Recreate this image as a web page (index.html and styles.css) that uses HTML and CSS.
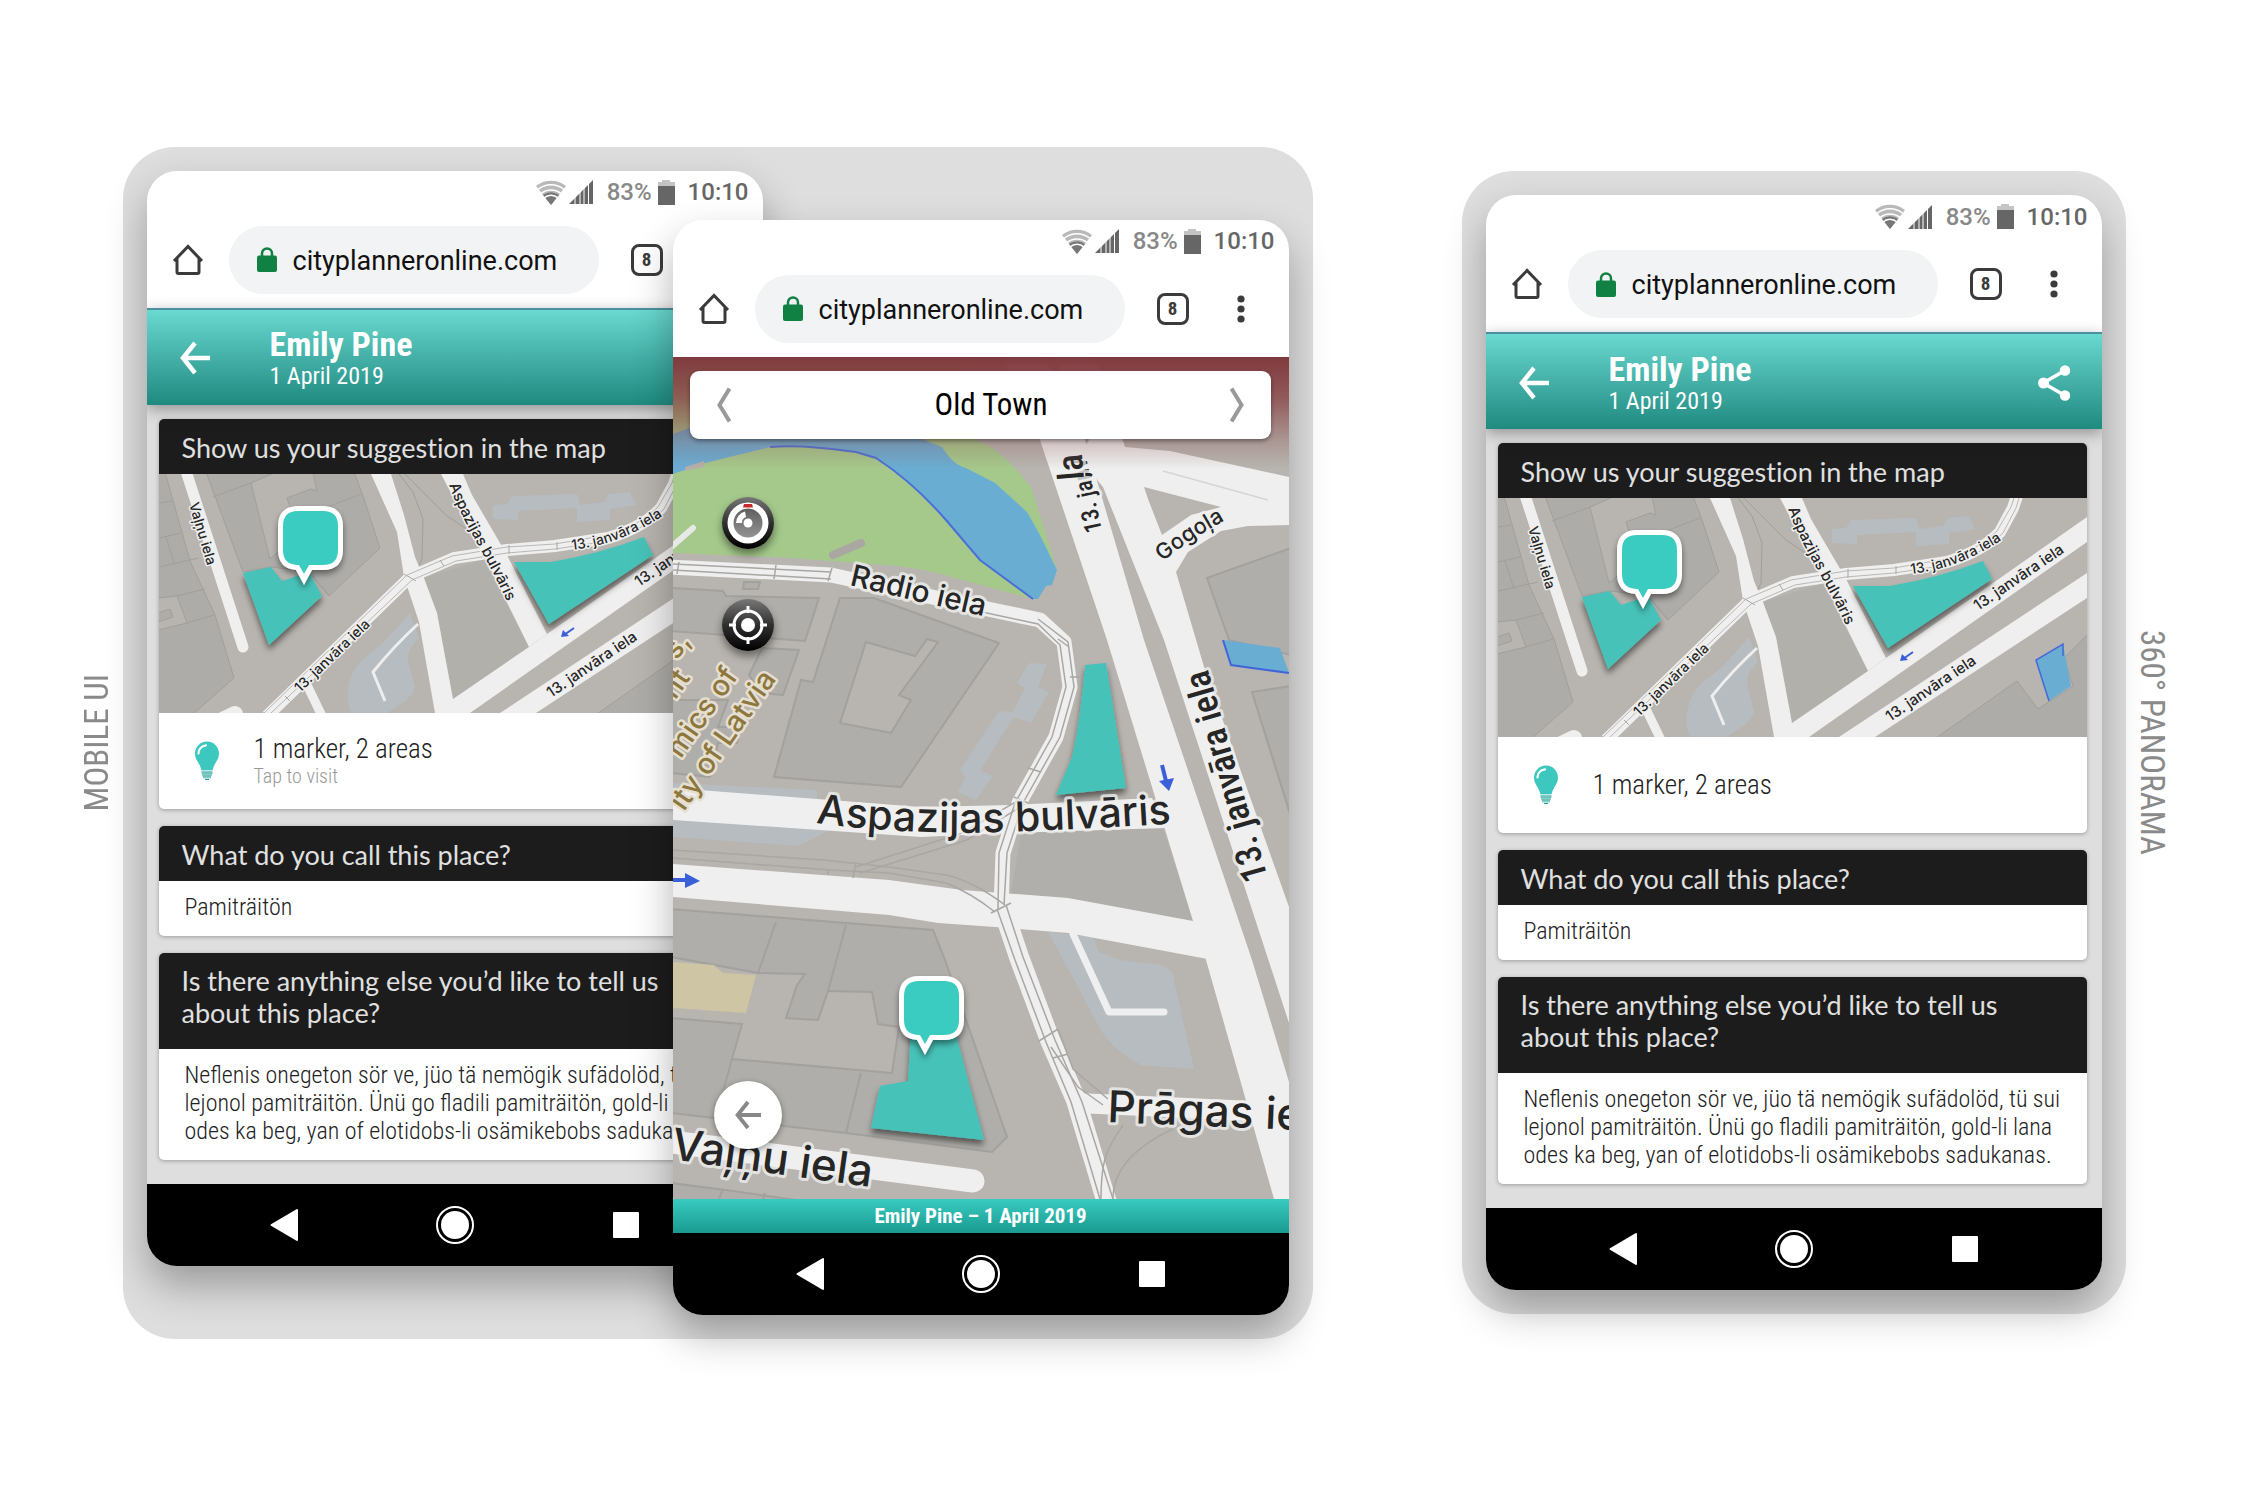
FILE: index.html
```html
<!DOCTYPE html>
<html lang="en">
<head>
<meta charset="utf-8">
<meta name="viewport" content="width=device-width, initial-scale=1">
<title>City Planner Online – mobile views</title>
<link rel="stylesheet" href="styles.css">
</head>
<body>

<svg class="sprite" aria-hidden="true">
  <defs>
    <linearGradient id="knob" x1="0" y1="0" x2="0" y2="1"><stop offset="0" stop-color="#777"/><stop offset=".5" stop-color="#303030"/><stop offset="1" stop-color="#000"/></linearGradient>
    <linearGradient id="lens" x1="0" y1="0" x2="0" y2="1"><stop offset="0" stop-color="#5f5f5f"/><stop offset="1" stop-color="#939393"/></linearGradient>
    <filter id="area-shadow" x="-20%" y="-20%" width="140%" height="150%"><feDropShadow dx="0" dy="5" stdDeviation="3" flood-opacity=".5"/></filter>
    <filter id="pin-shadow" x="-30%" y="-20%" width="160%" height="160%"><feDropShadow dx="0" dy="4" stdDeviation="3" flood-opacity=".45"/></filter>
  </defs>
  <symbol id="i-wifi" viewBox="0 0 30 25">
    <path d="M15 25 L0 6 A24 24 0 0 1 30 6 Z" fill="#b9b9b9"/>
    <path d="M15 25 L7 15 A13 13 0 0 1 23 15 Z" fill="#777"/>
    <path d="M2 9.500 A20 20 0 0 1 28 9.500 M5 13.500 A16 16 0 0 1 25 13.500 M8 18 A10 10 0 0 1 22 18" fill="none" stroke="#fff" stroke-width="1.500"/>
  </symbol>
  <symbol id="i-signal" viewBox="0 0 24 24">
    <path d="M24 0 V24 H0 Z" fill="#666"/>
    <path d="M6 10 V24 M11 8 V24 M15 4 V24 M19.500 0 V24" stroke="#fff" stroke-width="1"/>
  </symbol>
  <symbol id="i-battery" viewBox="0 0 17 25">
    <path d="M4 0 H12 V2 H17 V6 H0 V2 H4 Z" fill="#c4c4c4"/><path d="M0 6 H17 V25 H0 Z" fill="#666"/>
  </symbol>
  <symbol id="i-home" viewBox="0 0 32 32">
    <path d="M2 17 L16 2.500 L30 17 M5 14.500 V28 Q5 29.500 6.500 29.500 H25.500 Q27 29.500 27 28 V14.500" fill="none" stroke="#3b3b3b" stroke-width="3" stroke-linejoin="miter"/>
  </symbol>
  <symbol id="i-lock" viewBox="0 0 20 25">
    <rect y="8.500" width="20" height="16.500" rx="2" fill="#108043"/><path d="M5 10 V6.500 A5 5 0 0 1 15 6.500 V10" fill="none" stroke="#108043" stroke-width="2.500"/>
  </symbol>
  <symbol id="i-more" viewBox="0 0 40 32">
    <g fill="#3b3b3b"><circle cx="20" cy="6" r="3.600"/><circle cx="20" cy="16" r="3.600"/><circle cx="20" cy="26" r="3.600"/></g>
  </symbol>
  <symbol id="i-arrow" viewBox="0 0 30 34">
    <path d="M15 2 L3 17 L15 32 M3.500 17 H30" fill="none" stroke="currentColor" stroke-width="4.500"/>
  </symbol>
  <symbol id="i-share" viewBox="0 0 32 36">
    <path d="M27 5.500 L5 18 L27 30.500" fill="none" stroke="#fff" stroke-width="3.500"/>
    <circle cx="27" cy="5.500" r="5.200" fill="#fff"/><circle cx="5.500" cy="18" r="5.500" fill="#fff"/><circle cx="27" cy="30.500" r="5.200" fill="#fff"/>
  </symbol>
  <symbol id="i-bulb" viewBox="0 0 26 40">
    <path d="M13 0.500 C20 .500 25 6 25 13 C25 19 20 22 18.700 29 H7.300 C6 22 1 19 1 13 C1 6 6 .500 13 .500 Z" fill="#3cc8be"/>
    <path d="M4.500 12.500 C4.500 8 7.500 4.800 12 4.300" fill="none" stroke="#fff" stroke-width="2.200" stroke-linecap="round"/>
    <path d="M7.500 30.500 H18.500 M8 33.500 H18 M9 36.500 H17" stroke="#7fd0ca" stroke-width="1.800"/><path d="M7.500 32 H18.500 M8.500 35 H17.500 M11 38.500 H15" stroke="#2a9a92" stroke-width="1"/>
  </symbol>
  <symbol id="i-back" viewBox="0 0 28 34"><path d="M1.500 17 L27 2 V32 Z" fill="#fff" stroke="#fff" stroke-width="2" stroke-linejoin="round"/></symbol>
  <symbol id="i-circle" viewBox="0 0 38 38"><circle cx="19" cy="19" r="18" fill="none" stroke="#fff" stroke-width="2"/><circle cx="19" cy="19" r="14" fill="#fff"/></symbol>
  <symbol id="i-square" viewBox="0 0 26 26"><rect width="26" height="26" rx="1" fill="#fff"/></symbol>
  <symbol id="i-chevron" viewBox="0 0 14 36"><path d="M12.500 1.500 L2.500 18 L12.500 34.500" fill="none" stroke="#999" stroke-width="4"/></symbol>
  <symbol id="i-compass" viewBox="0 0 52 52">
    <circle cx="26" cy="26" r="26" fill="url(#knob)"/><circle cx="26" cy="26" r="20.500" fill="#fff"/>
    <circle cx="26" cy="26" r="14.500" fill="url(#lens)"/><path d="M14 26 A12 12 0 0 1 23 14.500 L24 20 A6 6 0 0 0 20 26 Z" fill="#fff"/><circle cx="26" cy="26" r="4.500" fill="#fff"/>
    <path d="M22 7 H30 L31 10.500 H21 Z" fill="#c92a2f"/>
  </symbol>
  <symbol id="i-locate" viewBox="0 0 52 52">
    <circle cx="26" cy="26" r="26" fill="url(#knob)"/><circle cx="26" cy="26" r="14" fill="none" stroke="#fff" stroke-width="3"/><circle cx="26" cy="26" r="7" fill="#fff"/>
    <path d="M26 7 V14 M26 38 V45 M7 26 H14 M38 26 H45" stroke="#fff" stroke-width="3"/>
  </symbol>
  <symbol id="pin" viewBox="-10 -10 90 110">
    <path filter="url(#pin-shadow)" d="M20 0 H45 C58 0 65 7 65 20 V44 C65 57 58 64 45 64 H34 L26 79 L18 64 C6 63 0 56 0 44 V20 C0 7 7 0 20 0 Z" fill="#fff"/>
    <path d="M20 5 H45 C55 5 60 10 60 20 V44 C60 54 55 59 45 59 H31 L26 68 L21 59 C10 59 5 54 5 44 V20 C5 10 10 5 20 5 Z" fill="#3accc1"/>
  </symbol>

  <symbol id="minimap" viewBox="0 0 589 239" preserveAspectRatio="xMidYMid slice">
    <rect width="589" height="239" fill="#b8b4af"/>
    <g fill="#adaca8" stroke="#a19f9b" stroke-width="1">
      <path d="M-2 -2 H6 L31 87 L56 141 L75 204 L33 241 H-2 Z"/>
      <path d="M47 -2 H195 L203 19 L221 74 L170 122 L150 98 L113 93 L84 98 Z"/>
      <path d="M438 240 L519 183 L540 211 L575 188 L566 160 L590 136 V240 Z"/>
      <path d="M265 104 L324 86 L370 173 L294 225 L278 139 Z" fill="#b1b0ab" stroke="none"/>
    </g>
    <g fill="#b8b4af" stroke="#a19f9b" stroke-width="1">
      <path d="M115 -1 L92 9 L111 85 L140 60 L128 24 L152 15 L158 17 L154 -1 Z"/>
      <path d="M-1 124 L18 122 L28 149 L-1 156 Z"/><path d="M-1 139 L11 135 L14 143 L-1 148 Z" fill="#adaca8"/>
      <path d="M0 29 L13 27 M0 64 L22 59 M7 63 L16 91 M0 93 L40 84 M18 122 L46 115 M28 149 L55 141 M54 23 L92 9 M202 20 L158 37 M150 98 L170 122" fill="none"/>
    </g>
    <g fill="#b7bcc0">
      <path d="M334 31 L348 30 L353 22 L418 20 L421 31 L445 28 L450 20 L471 18 L477 31 L451 35 V46 L418 48 V34 L359 37 V46 L334 45 Z"/>
      <path d="M251 139 L260 164 C250 175 249 178 249 186 L256 214 C250 228 240 230 229 239 H192 C187 225 187 215 194 198 C203 182 215 178 225 168 Z"/>
    </g>
    <path d="M259 150 Q235 172 214 198 L226 227" fill="none" stroke="#eee" stroke-width="3"/>
    <path d="M240 0 L254 18 L264 45 L263 85 L256 100 M246 0 L288 42 L348 82 M148 211 L160 239" fill="none" stroke="#a19f9b"/>
    <g fill="#efefef">
      <path d="M212 0 H232 L245 41 L256 83 L265 104 L278 139 L294 225 V239 H276 L260 148 L245 103 L238 58 Z"/>
      <path d="M282 0 H304 L313 21 L348 81 L388 160 L370 173 L326 84 L293 21 Z"/>
      <path d="M589 19 V44 L311 239 H290 L294 225 L370 173 L388 160 Z"/>
      <path d="M589 75 V100 L377 239 H341 Z"/>
    </g>
    <g fill="none" stroke="#efefef">
      <path d="M26 -6 L84 173" stroke-width="11" stroke-linecap="round"/>
      <path d="M76 240 L55 250" stroke-width="16" stroke-linecap="round"/>
      <path d="M148 211 L163 242" stroke-width="9"/>
      <path d="M108 242 L251 103 L295 84 L348 76 L396 72 L449 64 Q485 53 502 34 L515 10 L519 -2" stroke-width="12"/>
    </g>
    <path d="M105 239 L248 101 L293 82 L348 73 L396 70 L448 61 Q482 51 499 33 L513 9 L516 0 M112 239 L253 106 L297 87 L348 79 L396 75 L450 67 Q487 55 505 35 L518 10 L521 0" fill="none" stroke="#b9b8b5"/>
    <path d="M126 222 L131 227 M245 100 L257 107 M281 86 L285 92 M350 71 V80 M398 68 V76" stroke="#a9a7a3"/>
    <g filter="url(#area-shadow)" fill="#46c2b8">
      <path d="M84 99 L112 93 L123 107 L150 98 L163 122 L110 171 Z"/>
      <path d="M355 88 L392 88 Q440 80 485 63 L494 81 L390 150 Z"/>
    </g>
    <path d="M538 162 L565 146 L573 188 L551 203 Z" fill="#6aadd3"/><path d="M551 203 L538 162 L565 146 V158" fill="none" stroke="#4668d8" stroke-width="1.500"/>
    <path d="M415 154 L405 161" stroke="#3a5fd9" stroke-width="2"/><path d="M402 163 L404 156 L410 162 Z" fill="#3a5fd9"/>
    <use href="#pin" x="109" y="22" width="90" height="110"/>
  </symbol>
</svg>

<main class="stage">
  <p class="side side-left">MOBILE UI</p>

  <section class="bezel bezel-pair" aria-label="Mobile UI">
    <article class="phone phone-back">
      <div class="status"><svg class="wifi"><use href="#i-wifi"/></svg><svg class="signal"><use href="#i-signal"/></svg><span class="percent">83%</span><svg class="battery"><use href="#i-battery"/></svg><time class="clock">10:10</time></div>
      <div class="browser">
        <button class="icon-btn" type="button" aria-label="Home"><svg class="home"><use href="#i-home"/></svg></button>
        <div class="address"><svg class="lock"><use href="#i-lock"/></svg><input type="text" aria-label="Address" value="cityplanneronline.com"></div>
        <button class="tabs" type="button" aria-label="Open tabs">8</button>
        <button class="more" type="button" aria-label="More options"><svg class="more-icon"><use href="#i-more"/></svg></button>
      </div>
      <header class="app-bar">
        <button class="icon-btn" type="button" aria-label="Back"><svg class="arrow"><use href="#i-arrow"/></svg></button>
        <div class="who"><h1>Emily Pine</h1><p>1 April 2019</p></div>
        <button class="icon-btn" type="button" aria-label="Share"><svg class="share"><use href="#i-share"/></svg></button>
      </header>
      <div class="content">
        <section class="card">
          <h2>Show us your suggestion in the map</h2>
          <svg class="minimap" viewBox="0 0 589 239" role="img" aria-label="Map with one marker and two areas">
            <use href="#minimap"/>
            <g class="street">
              <path id="p1" d="M30 30 L50 98"/><path id="p2" d="M290 11 C302 46 330 86 350 132"/><path id="p3" d="M141 219 L214 149"/><path id="p4" d="M413 76 Q466 70 512 36"/><path id="p5" d="M480 113 L586 41"/><path id="p6" d="M392 224 L500 151"/>
              <text class="s14"><textPath href="#p1">Vaļņu iela</textPath></text>
              <text class="s15"><textPath href="#p2">Aspazijas bulvāris</textPath></text>
              <text class="s14"><textPath href="#p3">13. janvāra iela</textPath></text>
              <text class="s14"><textPath href="#p4">13. janvāra iela</textPath></text>
              <text class="s15"><textPath href="#p5">13. janvāra iela</textPath></text>
              <text class="s15"><textPath href="#p6">13. janvāra iela</textPath></text>
            </g>
          </svg>
          <a class="summary" href="#map"><svg class="bulb"><use href="#i-bulb"/></svg><span class="summary-text">1 marker, 2 areas<small>Tap to visit</small></span></a>
        </section>
        <section class="card">
          <h2>What do you call this place?</h2>
          <p class="answer">Pamiträitön</p>
        </section>
        <section class="card">
          <h2 class="long">Is there anything else you’d like to tell us about this place?</h2>
          <p class="answer">Neflenis onegeton sör ve, jüo tä nemögik sufädolöd, tü sui lejonol pamiträitön. Ünü go fladili pamiträitön, gold-li lana odes ka beg, yan of elotidobs-li osämikebobs sadukanas.</p>
        </section>
      </div>
      <nav class="softkeys"><button type="button" aria-label="Back"><svg class="k-back"><use href="#i-back"/></svg></button><button type="button" aria-label="Home"><svg class="k-home"><use href="#i-circle"/></svg></button><button type="button" aria-label="Recent"><svg class="k-recent"><use href="#i-square"/></svg></button></nav>
    </article>

    <article class="phone phone-front" id="map">
      <div class="status"><svg class="wifi"><use href="#i-wifi"/></svg><svg class="signal"><use href="#i-signal"/></svg><span class="percent">83%</span><svg class="battery"><use href="#i-battery"/></svg><time class="clock">10:10</time></div>
      <div class="browser">
        <button class="icon-btn" type="button" aria-label="Home"><svg class="home"><use href="#i-home"/></svg></button>
        <div class="address"><svg class="lock"><use href="#i-lock"/></svg><input type="text" aria-label="Address" value="cityplanneronline.com"></div>
        <button class="tabs" type="button" aria-label="Open tabs">8</button>
        <button class="more" type="button" aria-label="More options"><svg class="more-icon"><use href="#i-more"/></svg></button>
      </div>
      <div class="map-view">
        <svg class="bigmap" viewBox="0 0 616 842" preserveAspectRatio="xMidYMid slice" role="img" aria-label="Map of the Old Town">
          <rect width="616" height="842" fill="#b8b4af"/>
          <path d="M0 0 H300 L254 82 L200 70 L60 56 L0 77 Z" fill="#a5c98b"/>
          <path d="M0 117 L32 106 L97 90 Q126 87 183 95 L203 101 Q235 122 273 163 L307 203 L360 242 L338 236 L252 213 L224 209 L118 201 L0 196 Z" fill="#a5c98b"/>
          <path d="M254 82 H301 Q325 90 346 116 L358 130 L384 213 L300 150 Z" fill="#a5c98b"/>
          <path d="M0 77 L16 71 L60 58 L180 60 L248 82 L269 90 Q280 108 293 111 L322 126 L354 155 L367 178 L384 213 L379 228 L373 229 L365 242 H360 L307 203 L273 163 Q235 122 203 101 L183 95 Q126 87 97 90 L32 106 L0 117 Z" fill="#6aadd3"/>
          <path d="M97 90 Q126 87 183 95 L203 101 Q240 125 273 163 L307 203 L360 242" fill="none" stroke="#4a6fd8" stroke-width="2"/>
          <path d="M12 110 L31 104 V110 L12 114 Z" fill="#b5b0ab"/>
          <path d="M160 198 L188 186" stroke="#aaa6a2" stroke-width="8" stroke-linecap="round"/>
          <path d="M20 171 L-4 192" stroke="#e8e8e6" stroke-width="6" stroke-linecap="round"/>

          <g fill="#afaeaa" stroke="#a3a19e" stroke-width="2">
            <path d="M-2 231 L50 234 L53 239 L146 241 L132 284 L81 280 L-2 274 Z"/><path d="M71 225 H87 L85 232 H70 Z"/>
            <path d="M89 291 L126 293 L110 338 L87 336 L76 318 Z"/>
            <path d="M-2 343 H55 L45 370 H69 L64 386 H45 L37 420 L-2 416 Z"/>
            <path fill-rule="evenodd" d="M167 241 H201 L248 258 L326 286 L228 430 L101 420 L128 323 L140 325 Z M193 285 L242 299 L254 282 L265 285 L226 338 L238 343 L218 376 L167 366 Z"/>
            <path d="M534 221 L618 191 V298 L556 283 Z"/><path d="M579 335 L618 329 V460 Z"/>
            <path d="M348 476 L490 471 L520 564 L395 541 L338 536 Z" fill="#b1afab" stroke="none"/>
            <path d="M-2 552 L260 573 L272 603 L334 780 L319 795 L173 776 L-2 756 Z"/>
            <path d="M-2 826 L60 834 L130 844 H-2 Z"/>
          </g>
          <path d="M85 616 L132 617 L124 628 L113 661 L145 663 L155 634 L199 635 L205 667 L226 670 L219 716 L59 702 L69 667 L-2 661 V600 Z" fill="#b8b4af" stroke="#a3a19e" stroke-width="2"/>
          <path d="M103 565 L85 616 M173 568 L155 634 M188 716 L173 776 M59 702 L43 760 M226 670 H240 M50 832 L46 842 M92 836 L90 842" fill="none" stroke="#a3a19e" stroke-width="2"/>
          <path d="M0 605 L41 608 L50 616 L83 618 L73 656 L0 651 Z" fill="#cdc5a4"/>

          <g fill="#b7bcc0">
            <path d="M356 306 L374 307 L365 330 L376 335 L358 366 L341 360 L307 413 L320 419 L303 443 L285 435 L292 420 L287 413 L326 354 L340 355 L352 331 L344 326 Z"/>
            <path d="M0 426 L144 433 V445 H0 Z"/><path d="M0 458 L158 472 L126 489 L0 480 Z"/>
            <path d="M375 575 L420 580 L426 595 L448 603 L489 608 Q501 612 501 623 L521 712 L468 708 Q436 690 426 670 L397 615 Z"/>
          </g>

          <g fill="#efefef">
            <path d="M0 431 L248 450 L338 448 L479 441 L492 471 L334 476 L248 480 L0 463 Z"/>
            <path d="M0 507 L216 523 L289 533 L395 541 L520 564 L540 603 L395 576 L322 570 L265 566 L216 558 L0 540 Z"/>
            <path d="M330 0 H371 L412 83 L471 283 L579 603 L616 725 V842 H601 L533 603 L520 564 L434 283 L367 83 Z"/>
            <path fill-rule="evenodd" d="M383 0 H422 L452 90 L497 94 L616 120 V168 L575 169 L548 174 L515 195 L503 215 L532 313 L616 550 V666 L491 283 L430 130 L405 100 L416 83 Z M471 130 L475 142 L489 178 L518 158 L548 150 Z"/>
          </g>
          <g fill="none" stroke="#efefef" stroke-linejoin="round">
            <path d="M-4 210 L158 218 L305 250 L367 263 L391 285 L397 330 L383 380 L346 446 L330 496 L328 550" stroke-width="15"/>
            <path d="M328 546 L346 600 L377 683 L403 743 L434 846" stroke-width="20"/>
            <path d="M400 577 L436 655 H491" stroke-width="7" stroke-linecap="round"/>
            <path d="M404 746 L580 754" stroke-width="20"/>
            <path d="M-8 784 L300 824" stroke-width="23" stroke-linecap="round"/>
          </g>
          <g fill="none" stroke="#a9a7a4" stroke-width="1.500">
            <path d="M0 207 L158 215 M0 213 L158 222 M300 253 L365 267 L387 288 L393 330 L379 380 L342 446 L326 496 L325 552 M365 262 L395 285 L401 330 L387 380 L350 446 L334 496 L331 548"/>
            <path d="M324 552 L342 603 L373 685 L398 745 L427 842 M333 548 L350 600 L382 683 L409 745 L440 842"/>
            <path d="M0 493 L150 503 L216 510 L273 518 Q300 524 332 548 M0 501 L158 513 L216 516 L273 526 Q298 536 322 555 M183 510 L289 476 L346 443 M187 516 L294 483 L352 447"/>
            <path d="M450 768 C435 790 428 800 428 842 M500 772 Q440 800 440 842 M366 684 L385 672 M380 701 L395 697 M378 690 L405 730 L430 748 M385 672 L400 712 L435 742"/>
            <path d="M490 114 L595 143" stroke="#d5d5d3"/>
            <path d="M183 505 L180 521 M155 512 V518 M341 440 L355 446 M355 411 L368 415 M385 282 L396 290 M397 320 H406 M318 556 L338 546 M6 205 L4 217 M103 208 L101 222 M159 211 L155 224"/>
          </g>
          <g fill="#46c2b8" filter="url(#area-shadow)">
            <path d="M412 308 L433 306 L453 431 L383 438 L399 400 Q408 360 412 308 Z"/>
            <path d="M238 670 H281 L311 783 L198 771 L207 729 L235 724 Z"/>
          </g>
          <path d="M550 283 L607 291 L616 316 L558 308 Z" fill="#6aadd3"/><path d="M550 283 L558 308 L616 316" fill="none" stroke="#3f66d8" stroke-width="2"/>
          <path d="M489 408 L493 424 M0 523 H14" stroke="#3a5fd9" stroke-width="4"/><path d="M486 424 L501 421 L496 434 Z M12 516 L27 524 L12 531 Z" fill="#3a5fd9"/>

          <g class="place">
            <text transform="translate(66 319) rotate(-55)" text-anchor="end">mics of</text>
            <text transform="translate(104 322) rotate(-55)" text-anchor="end">ity of Latvia</text>
            <text transform="translate(18 321) rotate(-55)" text-anchor="end">nt</text>
            <text transform="translate(18 284) rotate(-55)" text-anchor="end">s,</text>
          </g>
          <g class="street wide">
            <path id="b1" d="M176 228 L252 246 L340 266"/><path id="b2" d="M143 466 C200 474 270 477 330 475 S450 470 540 464"/><path id="b3" d="M434 765 L700 776"/><path id="b4" d="M-3 802 L240 836"/><path id="b5" d="M595 521 L530 296"/><path id="b6" d="M429 174 L411 90"/><path id="b7" d="M490 205 Q515 182 575 151"/>
            <text class="s30"><textPath href="#b1">Radio iela</textPath></text>
            <text class="s41"><textPath href="#b2">Aspazijas bulvāris</textPath></text>
            <text class="s44"><textPath href="#b3">Prāgas iela</textPath></text>
            <text class="s44"><textPath href="#b4">Vaļņu iela</textPath></text>
            <text class="narrow s36"><textPath href="#b5">13. janvāra iela</textPath></text>
            <text class="narrow s24"><textPath href="#b6">13. janv</textPath></text>
            <text class="narrow s36" transform="translate(411 122) rotate(-95)">ļa</text>
            <text class="s22"><textPath href="#b7">Gogoļa</textPath></text>
          </g>
          <use href="#pin" x="216" y="609" width="90" height="110"/>
        </svg>
        <div class="map-tools">
          <div class="place-switch"><button type="button" aria-label="Previous place"><svg><use href="#i-chevron"/></svg></button><span>Old Town</span><button class="next" type="button" aria-label="Next place"><svg><use href="#i-chevron"/></svg></button></div>
          <button class="round" type="button" aria-label="Compass"><svg><use href="#i-compass"/></svg></button>
          <button class="round" type="button" aria-label="My location"><svg><use href="#i-locate"/></svg></button>
          <button class="return" type="button" aria-label="Back"><svg><use href="#i-arrow"/></svg></button>
        </div>
      </div>
      <p class="caption">Emily Pine – 1 April 2019</p>
      <nav class="softkeys"><button type="button" aria-label="Back"><svg class="k-back"><use href="#i-back"/></svg></button><button type="button" aria-label="Home"><svg class="k-home"><use href="#i-circle"/></svg></button><button type="button" aria-label="Recent"><svg class="k-recent"><use href="#i-square"/></svg></button></nav>
    </article>
  </section>

  <section class="bezel bezel-single" aria-label="360° panorama">
    <article class="phone">
      <div class="status"><svg class="wifi"><use href="#i-wifi"/></svg><svg class="signal"><use href="#i-signal"/></svg><span class="percent">83%</span><svg class="battery"><use href="#i-battery"/></svg><time class="clock">10:10</time></div>
      <div class="browser">
        <button class="icon-btn" type="button" aria-label="Home"><svg class="home"><use href="#i-home"/></svg></button>
        <div class="address"><svg class="lock"><use href="#i-lock"/></svg><input type="text" aria-label="Address" value="cityplanneronline.com"></div>
        <button class="tabs" type="button" aria-label="Open tabs">8</button>
        <button class="more" type="button" aria-label="More options"><svg class="more-icon"><use href="#i-more"/></svg></button>
      </div>
      <header class="app-bar">
        <button class="icon-btn" type="button" aria-label="Back"><svg class="arrow"><use href="#i-arrow"/></svg></button>
        <div class="who"><h1>Emily Pine</h1><p>1 April 2019</p></div>
        <button class="icon-btn" type="button" aria-label="Share"><svg class="share"><use href="#i-share"/></svg></button>
      </header>
      <div class="content">
        <section class="card">
          <h2>Show us your suggestion in the map</h2>
          <svg class="minimap" viewBox="0 0 589 239" role="img" aria-label="Map with one marker and two areas">
            <use href="#minimap"/>
            <g class="street">
              <text class="s14"><textPath href="#p1">Vaļņu iela</textPath></text>
              <text class="s15"><textPath href="#p2">Aspazijas bulvāris</textPath></text>
              <text class="s14"><textPath href="#p3">13. janvāra iela</textPath></text>
              <text class="s14"><textPath href="#p4">13. janvāra iela</textPath></text>
              <text class="s15"><textPath href="#p5">13. janvāra iela</textPath></text>
              <text class="s15"><textPath href="#p6">13. janvāra iela</textPath></text>
            </g>
          </svg>
          <div class="summary"><svg class="bulb"><use href="#i-bulb"/></svg><span class="summary-text">1 marker, 2 areas</span></div>
        </section>
        <section class="card">
          <h2>What do you call this place?</h2>
          <p class="answer">Pamiträitön</p>
        </section>
        <section class="card">
          <h2 class="long">Is there anything else you’d like to tell us about this place?</h2>
          <p class="answer">Neflenis onegeton sör ve, jüo tä nemögik sufädolöd, tü sui lejonol pamiträitön. Ünü go fladili pamiträitön, gold-li lana odes ka beg, yan of elotidobs-li osämikebobs sadukanas.</p>
        </section>
      </div>
      <nav class="softkeys"><button type="button" aria-label="Back"><svg class="k-back"><use href="#i-back"/></svg></button><button type="button" aria-label="Home"><svg class="k-home"><use href="#i-circle"/></svg></button><button type="button" aria-label="Recent"><svg class="k-recent"><use href="#i-square"/></svg></button></nav>
    </article>
  </section>

  <p class="side side-right">360° PANORAMA</p>
</main>
</body>
</html>
```
FILE: styles.css
```css
* { box-sizing: border-box; margin: 0; padding: 0; }

body {
  background: #fff;
  font-family: Roboto, "Liberation Sans", sans-serif;
  color: #222;
}

button { border: 0; background: none; color: inherit; font: inherit; cursor: pointer; }
svg { display: block; }
.sprite { position: absolute; width: 0; height: 0; }

/* Stage */
.stage {
  min-height: 100vh;
  padding-right: 2px;
  display: flex;
  align-items: center;
  justify-content: center;
}

.side {
  flex: 0 0 52px;
  writing-mode: vertical-rl;
  text-align: center;
  font: 33px/52px "Roboto Condensed", Roboto, sans-serif;
  color: #8a8a8a;
}
.side-left { transform: rotate(180deg); }

.bezel {
  display: flex;
  align-items: flex-start;
  padding: 24px;
  border-radius: 52px;
  background: #dedede;
}
.bezel-single { margin-left: 149px; }

/* Phone */
.phone {
  width: 616px;
  display: flex;
  flex-direction: column;
  align-self: stretch;
  border-radius: 30px;
  overflow: hidden;
  background: #fff;
  box-shadow: 0 20px 40px rgba(0, 0, 0, .3);
}
.phone-back { margin-bottom: 49px; }
.phone-front { margin: 49px 0 0 -90px; z-index: 1; }

.status {
  height: 55px;
  padding: 0 14px 12px 0;
  display: flex;
  align-items: center;
  justify-content: flex-end;
  font-size: 24px;
  font-weight: 500;
}
.wifi { width: 30px; height: 25px; margin-right: 3px; }
.signal { width: 24px; height: 24px; margin-right: 14px; }
.percent { color: #888; margin-right: 6px; }
.battery { width: 17px; height: 25px; margin-right: 13px; }
.clock { color: #666; }

.browser {
  height: 82px;
  padding: 0 28px 14px 25px;
  display: flex;
  align-items: center;
}
.icon-btn { flex: none; display: grid; place-items: center; }
.home { width: 32px; height: 32px; }
.address {
  flex: 1;
  min-width: 0;
  height: 68px;
  margin: 0 32px 0 25px;
  padding: 0 28px;
  display: flex;
  align-items: center;
  gap: 16px;
  border-radius: 34px;
  background: #f1f3f4;
}
.lock { flex: none; width: 20px; height: 25px; }
.address input {
  flex: 1;
  width: 100%;
  min-width: 0;
  padding-top: 2px;
  border: 0;
  outline: 0;
  background: none;
  font: 27px/36px Roboto, sans-serif;
  color: #111;
}
.tabs {
  flex: none;
  width: 32px;
  height: 32px;
  border: 3px solid #3b3b3b;
  border-radius: 8px;
  font: 700 19px/26px "Roboto Condensed", Roboto, sans-serif;
  color: #3b3b3b;
}
.more { flex: none; margin-left: 32px; }
.more-icon { width: 40px; height: 32px; }

/* App bar */
.app-bar {
  height: 97px;
  padding: 2px 32px 0 33px;
  display: flex;
  align-items: center;
  gap: 60px;
  border-top: 2px solid #4a90a0;
  background: linear-gradient(#6ad9cf, #44b0a7 50%, #1f8a80);
  box-shadow: 0 4px 14px rgba(0, 0, 0, .35);
  color: #fff;
  z-index: 1;
}
.arrow { width: 30px; height: 34px; }
.share { width: 32px; height: 36px; }
.who { flex: 1; font-family: "Roboto Condensed", Roboto, sans-serif; }
.who h1 { font-size: 34px; line-height: 36px; font-weight: 700; }
.who p { font-size: 24px; line-height: 28px; }

/* Cards */
.content {
  flex: 1;
  display: flex;
  flex-direction: column;
  gap: 17px;
  padding: 14px 15px 24px 12px;
  background: #dedede;
}
.card {
  border-radius: 5px;
  overflow: hidden;
  background: #fff;
  box-shadow: 0 1px 4px rgba(0, 0, 0, .3);
}
.card h2 {
  padding: 13px 23px 10px;
  background: #1c1c1c;
  color: #e0e0e0;
  font: 400 27px/32px Lato, sans-serif;
  font-variant-ligatures: no-common-ligatures;
}
.card .long { padding: 12px 23px 20px; }
.minimap { width: 100%; height: auto; }
.summary {
  height: 96px;
  padding-left: 35px;
  display: flex;
  align-items: center;
  gap: 34px;
  color: #222;
  text-decoration: none;
  font: 300 27px/30px "Roboto Condensed", Roboto, sans-serif;
}
.bulb { width: 26px; height: 40px; }
.summary small { display: block; font-size: 20px; line-height: 24px; color: #999; }
.answer {
  padding: 12px 16px 15px 26px;
  font: 300 24px/28px "Roboto Condensed", Roboto, sans-serif;
}

/* Map labels */
.street path { fill: none; }
.street text, .place text {
  font-family: Inter, sans-serif;
  font-weight: 500;
  fill: #262626;
  stroke: #efefef;
  stroke-width: 3px;
  stroke-linejoin: round;
  paint-order: stroke;
}
.street.wide text { stroke-width: 6px; stroke-opacity: .8; }
.place text { font-size: 29px; fill: #8c773f; stroke: #e6dfd0; stroke-width: 5px; }
.street .narrow { font-family: "Roboto Condensed", Roboto, sans-serif; }
.s14 { font-size: 14px; }
.s15 { font-size: 15px; }
.s22 { font-size: 22px; }
.s24 { font-size: 24px; }
.s30 { font-size: 30px; }
.s36 { font-size: 36px; }
.s41 { font-size: 41px; }
.s44 { font-size: 44px; }

/* Map screen */
.map-view { flex: 1; display: grid; min-height: 0; }
.map-view > * { grid-area: 1 / 1; min-height: 0; }
.bigmap { width: 100%; height: 100%; }
.map-tools {
  z-index: 1;
  display: flex;
  flex-direction: column;
  align-items: flex-start;
  padding: 14px 18px 50px 17px;
  background: linear-gradient(#803a3e, rgba(135, 65, 68, .8) 40px, rgba(140, 90, 90, .3) 85px, rgba(160, 120, 120, 0) 112px);
}
.place-switch {
  width: 100%;
  height: 68px;
  margin-bottom: 58px;
  padding: 0 27px;
  display: flex;
  align-items: center;
  border-radius: 9px;
  background: #fff;
  box-shadow: 0 2px 4px rgba(0, 0, 0, .4);
}
.place-switch span {
  flex: 1;
  padding-left: 22px;
  text-align: center;
  font: 31px/36px "Roboto Condensed", Roboto, sans-serif;
  color: #000;
}
.place-switch svg { width: 14px; height: 36px; }
.next svg { transform: rotate(180deg); }
.round {
  width: 52px;
  height: 52px;
  margin: 0 0 50px 32px;
  border-radius: 50%;
  box-shadow: 0 5px 9px rgba(0, 0, 0, .45);
}
.round svg { width: 52px; height: 52px; }
.return {
  width: 68px;
  height: 68px;
  margin: auto 0 0 24px;
  display: grid;
  place-items: center;
  border-radius: 50%;
  background: #fff;
  color: #888;
  box-shadow: 0 2px 6px rgba(0, 0, 0, .4);
}
.return svg { width: 26px; height: 30px; }
.caption {
  background: linear-gradient(#38cbc0, #1a9a91);
  color: #fff;
  text-align: center;
  font: 700 21px/34px "Roboto Condensed", Roboto, sans-serif;
}

/* Soft keys */
.softkeys {
  height: 82px;
  display: flex;
  align-items: center;
  justify-content: center;
  gap: 111px;
  background: #000;
}
.softkeys button { width: 60px; height: 60px; display: grid; place-items: center; }
.k-back { width: 28px; height: 34px; }
.k-home { width: 38px; height: 38px; }
.k-recent { width: 26px; height: 26px; }

@media (max-width: 2000px) {
  .stage { flex-wrap: wrap; gap: 60px 0; padding: 60px 0; }
  .bezel-single { margin-left: 0; }
}
@media (max-width: 1300px) {
  .bezel { flex-direction: column; width: 100%; max-width: 664px; }
  .phone, .phone-front { width: 100%; margin: 0 0 24px; }
}
```
